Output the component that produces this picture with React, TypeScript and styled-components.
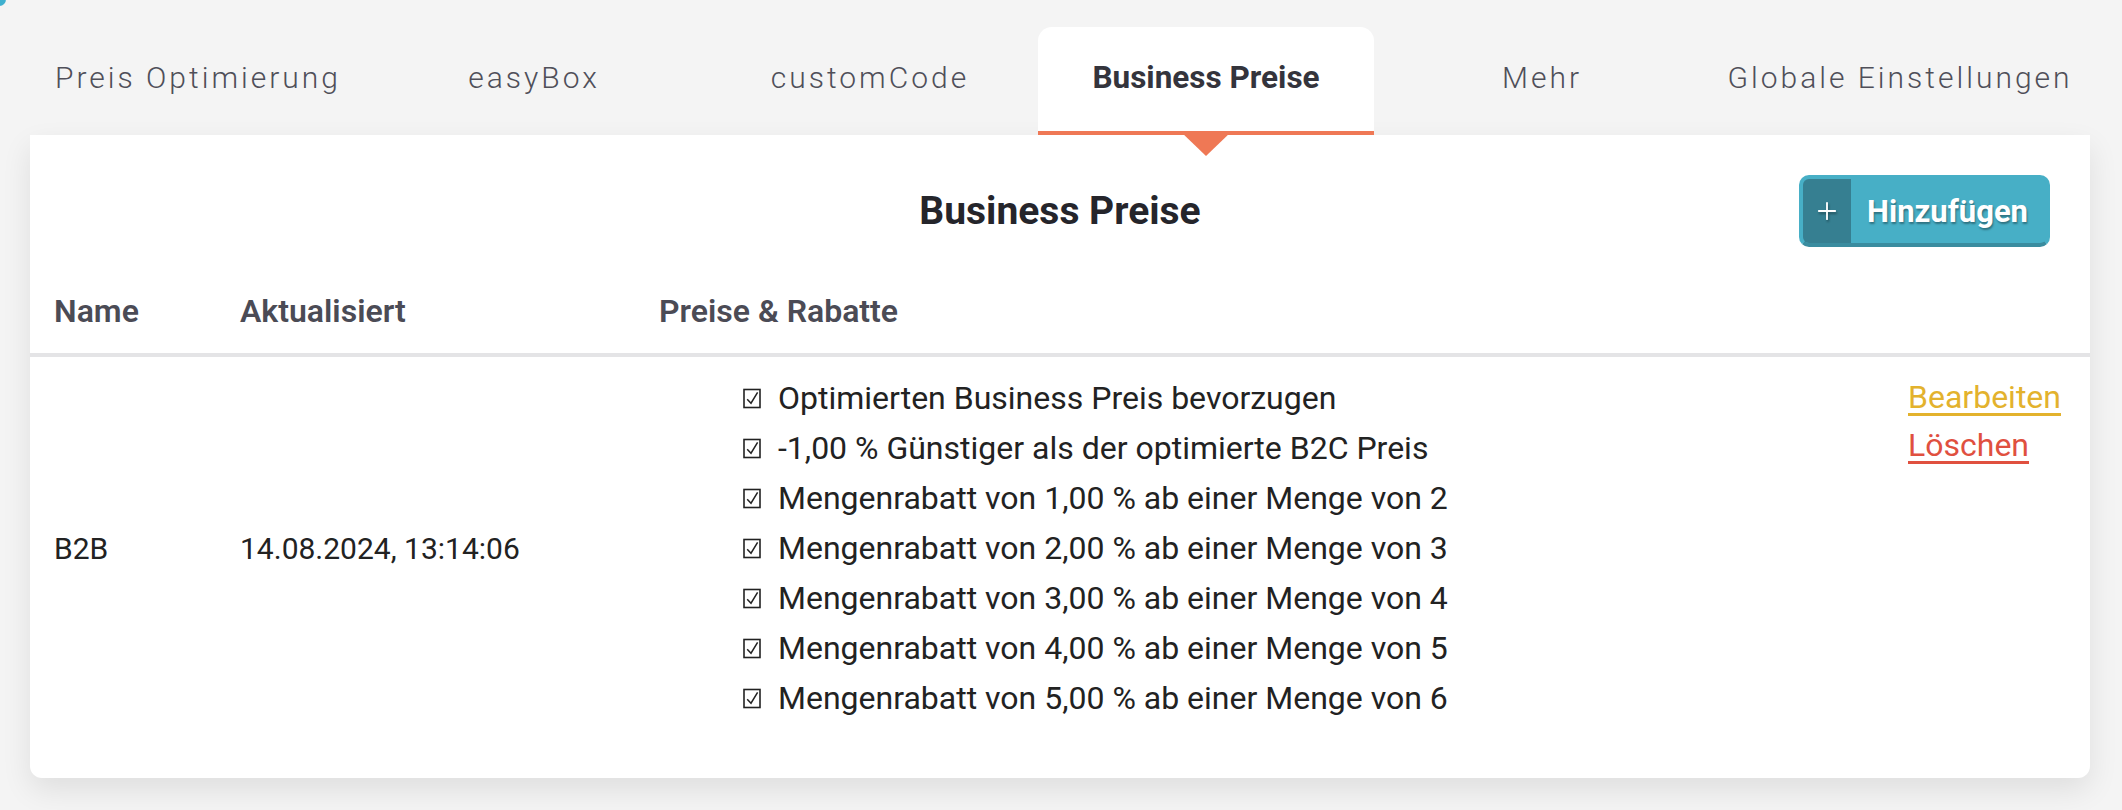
import React from 'react';
import styled, { createGlobalStyle, css } from 'styled-components';
import { Plus } from 'lucide-react';

type Tab = { label: string; active?: boolean; grow?: boolean };

const tabs: Tab[] = [
  { label: 'Preis Optimierung' },
  { label: 'easyBox' },
  { label: 'customCode' },
  { label: 'Business Preise', active: true },
  { label: 'Mehr' },
  { label: 'Globale Einstellungen', grow: true },
];

const rules = [
  'Optimierten Business Preis bevorzugen',
  '-1,00 % Günstiger als der optimierte B2C Preis',
  'Mengenrabatt von 1,00 % ab einer Menge von 2',
  'Mengenrabatt von 2,00 % ab einer Menge von 3',
  'Mengenrabatt von 3,00 % ab einer Menge von 4',
  'Mengenrabatt von 4,00 % ab einer Menge von 5',
  'Mengenrabatt von 5,00 % ab einer Menge von 6',
];

function CheckIcon() {
  return (
    <CheckSvg viewBox="0 0 18 21" width="18" height="21">
      <rect x="1" y="1.5" width="16" height="18" fill="none" stroke="#222" strokeWidth="1.6" />
      <path d="M4.2 11.2 L8 15.2 L14.6 4.4" fill="none" stroke="#222" strokeWidth="1.5" />
    </CheckSvg>
  );
}

function App() {
  return (
    <>
      <GlobalStyle />
      <Corner />
      <Page>
        <TabBar>
          {tabs.map((tab) => (
            <TabItem key={tab.label} isActive={!!tab.active} grow={!!tab.grow}>
              {tab.label}
            </TabItem>
          ))}
        </TabBar>
        <Panel>
          <TitleBar>
            <Title>Business Preise</Title>
            <AddButton type="button">
              <AddIcon>
                <Plus size={28} strokeWidth={1.6} />
              </AddIcon>
              <AddLabel>Hinzufügen</AddLabel>
            </AddButton>
          </TitleBar>
          <Table>
            <HeadRow>
              <HeadCell>Name</HeadCell>
              <HeadCell>Aktualisiert</HeadCell>
              <HeadCell>Preise &amp; Rabatte</HeadCell>
              <HeadCell />
            </HeadRow>
            <BodyRow>
              <Cell>B2B</Cell>
              <Cell>14.08.2024, 13:14:06</Cell>
              <RuleList>
                {rules.map((rule) => (
                  <RuleItem key={rule}>
                    <CheckIcon />
                    {rule}
                  </RuleItem>
                ))}
              </RuleList>
              <Actions>
                <ActionLink href="#" tone="edit">
                  Bearbeiten
                </ActionLink>
                <ActionLink href="#" tone="delete">
                  Löschen
                </ActionLink>
              </Actions>
            </BodyRow>
          </Table>
        </Panel>
      </Page>
    </>
  );
}

const GlobalStyle = createGlobalStyle`
  body {
    margin: 0;
    background: #f4f4f4;
    font-family: Roboto, "Noto Sans", sans-serif;
    color: #222;
  }
`;

const Corner = styled.div`
  position: fixed;
  top: -7px;
  left: -7px;
  width: 13px;
  height: 13px;
  border-radius: 50%;
  background: #3fb0cf;
`;

const Page = styled.div`
  min-height: 100vh;
  box-sizing: border-box;
  padding: 27px 32px 32px 30px;
`;

const TabBar = styled.div`
  display: flex;
  height: 108px;
`;

const TabItem = styled.div<{ isActive: boolean; grow: boolean }>`
  position: relative;
  z-index: 1;
  display: flex;
  align-items: center;
  justify-content: center;
  flex: ${({ grow }) => (grow ? '1 1 auto' : '0 0 336px')};
  box-sizing: border-box;
  padding-bottom: 8px;
  white-space: nowrap;
  font-size: 30px;
  font-weight: 300;
  letter-spacing: 3px;
  color: #4f4f59;

  ${({ isActive }) =>
    isActive &&
    css`
      background: #fff;
      border-radius: 14px 14px 0 0;
      border-bottom: 4px solid #ef7855;
      padding-bottom: 4px;
      font-size: 31.5px;
      font-weight: 700;
      letter-spacing: 0;
      color: #34343c;

      &::after {
        content: '';
        position: absolute;
        top: 100%;
        left: 50%;
        transform: translateX(-50%);
        border-left: 26px solid transparent;
        border-right: 26px solid transparent;
        border-top: 25px solid #ef7855;
      }
    `}
`;

const Panel = styled.div`
  background: #fff;
  border-radius: 0 0 12px 12px;
  box-shadow: 0 12px 30px rgba(0, 0, 0, 0.09);
  padding: 40px 0 34px;
`;

const TitleBar = styled.div`
  display: grid;
  grid-template-columns: 1fr auto 1fr;
  align-items: center;
  padding: 0 40px;
`;

const Title = styled.h1`
  grid-column: 2;
  margin: 0;
  font-size: 39px;
  font-weight: 700;
  color: #25252b;
`;

const AddButton = styled.button`
  justify-self: end;
  display: flex;
  align-items: stretch;
  height: 72px;
  box-sizing: border-box;
  padding: 0;
  border: 4px solid #47afc6;
  border-bottom-color: #3a8c9f;
  border-radius: 10px;
  background: #47afc6;
  color: #fff;
  font-family: inherit;
  cursor: pointer;
`;

const AddIcon = styled.span`
  display: flex;
  align-items: center;
  justify-content: center;
  width: 48px;
  border-radius: 6px 0 0 6px;
  background: #367f91;

  svg {
    filter: drop-shadow(1px 2px 1px rgba(0, 0, 0, 0.35));
  }
`;

const AddLabel = styled.span`
  display: flex;
  align-items: center;
  padding: 0 18px 0 16px;
  font-size: 31px;
  font-weight: 700;
  text-shadow: 1px 2px 2px rgba(0, 0, 0, 0.35);
`;

const Table = styled.div`
  margin-top: 27px;
`;

const rowGrid = css`
  display: grid;
  grid-template-columns: 186px 419px 1fr 158px;
  padding: 0 24px;
`;

const HeadRow = styled.div`
  ${rowGrid};
  align-items: center;
  height: 83px;
  box-sizing: border-box;
  padding-bottom: 5px;
  border-bottom: 4px solid #e4e4e6;
`;

const HeadCell = styled.div`
  font-size: 32px;
  font-weight: 600;
  color: #4b4b55;
`;

const BodyRow = styled.div`
  ${rowGrid};
  align-items: center;
  padding-top: 16px;
  padding-bottom: 21px;
`;

const Cell = styled.div`
  font-size: 30px;
`;

const RuleList = styled.ul`
  margin: 0;
  padding: 0 0 0 84px;
  list-style: none;
`;

const RuleItem = styled.li`
  display: flex;
  align-items: center;
  height: 50px;
  font-size: 32px;
  white-space: nowrap;
`;

const CheckSvg = styled.svg`
  flex-shrink: 0;
  margin-right: 17px;
`;

const Actions = styled.div`
  align-self: start;
  display: flex;
  flex-direction: column;
  align-items: flex-start;
`;

const ActionLink = styled.a<{ tone: 'edit' | 'delete' }>`
  line-height: 48px;
  font-size: 32px;
  text-decoration: underline;
  text-decoration-thickness: 3px;
  text-underline-offset: 5px;
  color: ${({ tone }) => (tone === 'edit' ? '#e3b22d' : '#e0503f')};
`;

export default App;
